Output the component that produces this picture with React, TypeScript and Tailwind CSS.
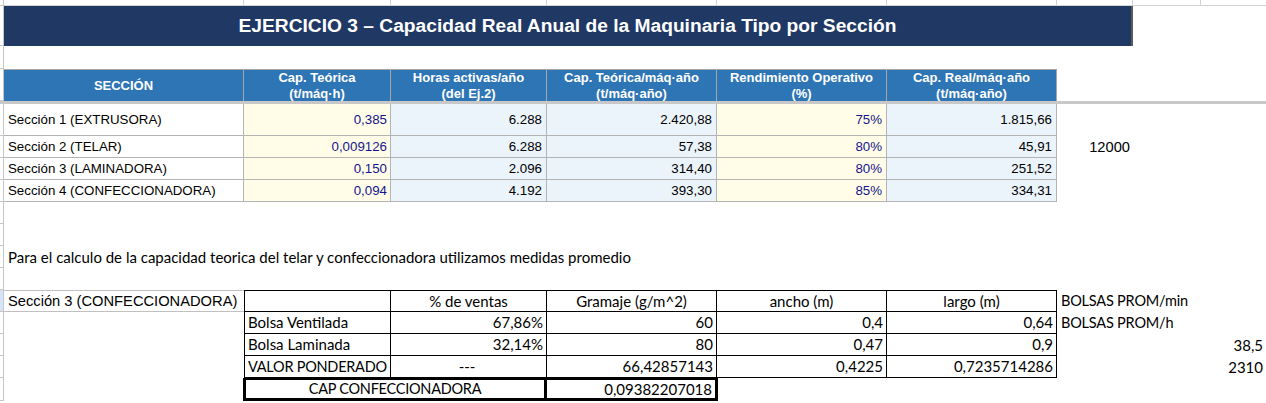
import React from "react"

const arial = "font-['Liberation_Sans',Arial,sans-serif]"
const calibri = "font-['Lato',sans-serif]"
const caps = "text-[14.5px] tracking-[-0.25px]"

// left strip of the row headers
function Strip({ h, selected = false }: { h: string; selected?: boolean }) {
  return (
    <div
      className={`${h} w-[4px] shrink-0 border-r border-b border-[#c6c6c6] ${
        selected ? "bg-[#d5e4f6]" : "bg-white"
      }`}
    />
  )
}

const dataRows = [
  { name: "Sección 1 (EXTRUSORA)", cap: "0,385", horas: "6.288", anual: "2.420,88", rend: "75%", real: "1.815,66", h: "h-[32px]" },
  { name: "Sección 2 (TELAR)", cap: "0,009126", horas: "6.288", anual: "57,38", rend: "80%", real: "45,91", h: "h-[22px]", extra: "12000" },
  { name: "Sección 3 (LAMINADORA)", cap: "0,150", horas: "2.096", anual: "314,40", rend: "80%", real: "251,52", h: "h-[22px]" },
  { name: "Sección 4 (CONFECCIONADORA)", cap: "0,094", horas: "4.192", anual: "393,30", rend: "85%", real: "334,31", h: "h-[22px]" },
]

const bottomRows = [
  { label: "Bolsa Ventilada", pct: "67,86%", gram: "60", ancho: "0,4", largo: "0,64", g: "BOLSAS PROM/h", i: "" },
  { label: "Bolsa Laminada", pct: "32,14%", gram: "80", ancho: "0,47", largo: "0,9", g: "", i: "38,5" },
  { label: "VALOR PONDERADO", pct: "---", gram: "66,42857143", ancho: "0,4225", largo: "0,7235714286", g: "", i: "2310" },
]

const cellGrid = "border-r border-b border-[#b4b4b4] flex items-center"
const bcell = "border-r border-b border-black flex items-center"

export default function App() {
  return (
    <div className={`w-[1266px] h-[403px] overflow-hidden bg-white text-black ${arial}`}>
      {/* top partial row */}
      <div className="flex h-[6px]">
        <Strip h="h-[6px]" />
        <div className="w-[240px] border-r border-b border-[#d4d4d4]" />
        <div className="w-[147px] border-r border-b border-[#d4d4d4]" />
        <div className="w-[156px] border-r border-b border-[#d4d4d4]" />
        <div className="w-[170px] border-r border-b border-[#d4d4d4]" />
        <div className="w-[170px] border-r border-b border-[#d4d4d4]" />
        <div className="w-[170px] border-r border-b border-[#d4d4d4]" />
        <div className="w-[76px] border-r border-b border-[#d4d4d4]" />
        <div className="w-[68px] border-r border-b border-[#d4d4d4]" />
        <div className="flex-1 border-b border-[#d4d4d4]" />
      </div>

      {/* title */}
      <div className="flex h-[40px]">
        <Strip h="h-[40px]" />
        <div className="w-[1129px] bg-[#203864] border-r-2 border-[#5b5b5b] flex items-center justify-center text-white font-bold text-[19.2px]">
          EJERCICIO 3 – Capacidad Real Anual de la Maquinaria Tipo por Sección
        </div>
      </div>

      <div className="flex h-[23px]">
        <Strip h="h-[23px]" />
      </div>

      {/* header */}
      <div className="flex h-[32px] text-white font-bold text-[13px] leading-[16px] text-center">
        <Strip h="h-[32px]" />
        <div className="w-[240px] bg-[#2e75b6] border-t border-r border-[#a6a6a6] flex items-center justify-center">SECCIÓN</div>
        <div className="w-[147px] bg-[#2e75b6] border-t border-r border-[#a6a6a6] flex flex-col justify-center">
          <span>Cap. Teórica</span>
          <span>(t/máq·h)</span>
        </div>
        <div className="w-[156px] bg-[#2e75b6] border-t border-r border-[#a6a6a6] flex flex-col justify-center">
          <span>Horas activas/año</span>
          <span>(del Ej.2)</span>
        </div>
        <div className="w-[170px] bg-[#2e75b6] border-t border-r border-[#a6a6a6] flex flex-col justify-center">
          <span>Cap. Teórica/máq·año</span>
          <span>(t/máq·año)</span>
        </div>
        <div className="w-[170px] bg-[#2e75b6] border-t border-r border-[#a6a6a6] flex flex-col justify-center">
          <span>Rendimiento Operativo</span>
          <span>(%)</span>
        </div>
        <div className="w-[170px] bg-[#2e75b6] border-t border-r border-[#a6a6a6] flex flex-col justify-center">
          <span>Cap. Real/máq·año</span>
          <span>(t/máq·año)</span>
        </div>
      </div>

      {/* frozen pane line */}
      <div className="h-[3px] bg-[#c8c8c8]" />

      {/* data */}
      {dataRows.map((r) => (
        <div key={r.name} className={`flex ${r.h} text-[13.3px]`}>
          <Strip h={r.h} />
          <div className={`w-[240px] bg-white pl-[4px] ${cellGrid}`}>{r.name}</div>
          <div className={`w-[147px] bg-[#fffde8] text-[#15158c] justify-end pr-[3px] ${cellGrid}`}>{r.cap}</div>
          <div className={`w-[156px] bg-[#ebf3fb] justify-end pr-[4px] ${cellGrid}`}>{r.horas}</div>
          <div className={`w-[170px] bg-[#ebf3fb] justify-end pr-[4px] ${cellGrid}`}>{r.anual}</div>
          <div className={`w-[170px] bg-[#fffde8] text-[#15158c] justify-end pr-[4px] ${cellGrid}`}>{r.rend}</div>
          <div className={`w-[170px] bg-[#ebf3fb] justify-end pr-[4px] ${cellGrid}`}>{r.real}</div>
          <div className="w-[76px] flex items-center justify-end pr-[3px] text-[14.7px]">{r.extra}</div>
        </div>
      ))}

      <div className="flex h-[22px]">
        <Strip h="h-[22px]" />
      </div>
      <div className="flex h-[22px]">
        <Strip h="h-[22px]" />
      </div>
      <div className="flex h-[22px]">
        <Strip h="h-[22px]" />
        <div className={`pl-[4px] flex items-center text-[15px] whitespace-nowrap ${calibri}`}>
          Para el calculo de la capacidad teorica del telar y confeccionadora utilizamos medidas promedio
        </div>
      </div>
      <div className="flex h-[22px]">
        <Strip h="h-[22px]" />
      </div>

      {/* bottom table */}
      <div className={`flex h-[22px] text-[15px] ${calibri}`}>
        <Strip h="h-[22px]" selected />
        <div className={`w-[240px] border-t border-b border-[#c0c0c0] pl-[4px] flex items-center whitespace-nowrap text-[14.7px] ${arial}`}>
          Sección 3 (CONFECCIONADORA)
        </div>
        <div className={`w-[147px] border-l border-t ${bcell}`} />
        <div className={`w-[156px] border-t justify-center ${bcell}`}>% de ventas</div>
        <div className={`w-[170px] border-t justify-center ${bcell}`}>Gramaje (g/m^2)</div>
        <div className={`w-[170px] border-t justify-center ${bcell}`}>ancho (m)</div>
        <div className={`w-[170px] border-t justify-center ${bcell}`}>largo (m)</div>
        <div className="pl-[4px] flex items-center whitespace-nowrap text-[14.5px] tracking-[-0.2px]">BOLSAS PROM/min</div>
      </div>
      {bottomRows.map((r) => (
        <div key={r.label} className={`flex h-[22px] text-[15px] ${calibri}`}>
          <Strip h="h-[22px]" />
          <div className="w-[240px]" />
          <div
            className={`w-[147px] border-l pl-[3px] whitespace-nowrap overflow-hidden ${r.label === "VALOR PONDERADO" ? caps : ""} ${bcell}`}
          >
            {r.label}
          </div>
          <div className={`w-[156px] pr-[3px] ${r.pct === "---" ? "justify-center" : "justify-end"} ${bcell}`}>{r.pct}</div>
          <div className={`w-[170px] justify-end pr-[3px] ${bcell}`}>{r.gram}</div>
          <div className={`w-[170px] justify-end pr-[3px] ${bcell}`}>{r.ancho}</div>
          <div className={`w-[170px] justify-end pr-[3px] ${bcell}`}>{r.largo}</div>
          <div className="w-[144px] pl-[4px] flex items-center whitespace-nowrap text-[14.5px] tracking-[-0.2px]">{r.g}</div>
          <div className="flex-1 flex items-center justify-end pr-[3px]">{r.i}</div>
        </div>
      ))}
      <div className={`flex h-[23px] text-[15px] ${calibri}`}>
        <Strip h="h-[23px]" />
        <div className="w-[239px]" />
        <div className={`w-[304px] border-[3px] border-t-2 border-black flex items-center justify-center ${caps}`}>
          CAP CONFECCIONADORA
        </div>
        <div className="w-[171px] border-[3px] border-t-2 border-l-0 border-black flex items-center justify-end pr-[3px]">0,09382207018</div>
      </div>
    </div>
  )
}
